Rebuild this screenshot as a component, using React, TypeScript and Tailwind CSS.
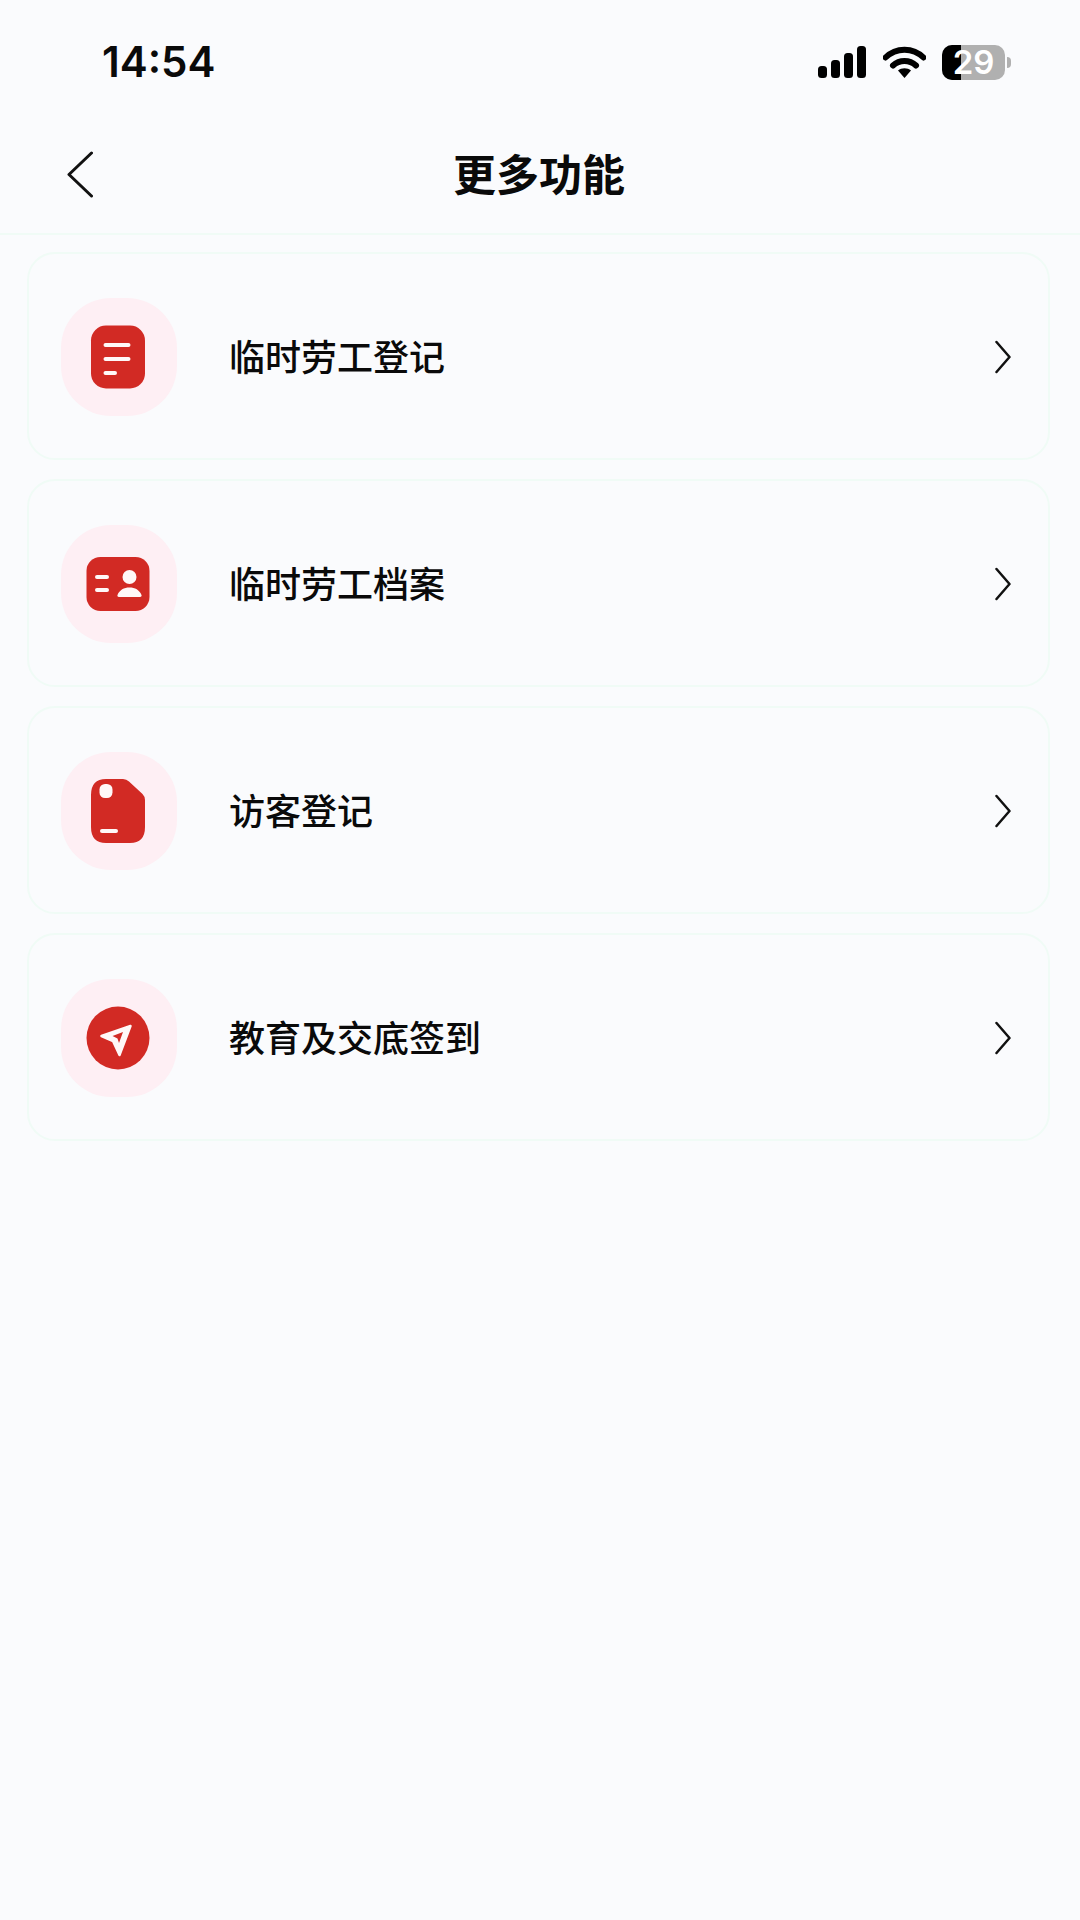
import { ReactNode } from 'react';

const cjk = "font-['Noto_Sans_CJK_SC','Noto_Sans_CJK_JP',sans-serif]";

function FileIcon() {
  return (
    <svg className="-ml-[2px]" width="64" height="64" viewBox="0 0 64 64">
      <rect x="5" y="0.5" width="54" height="63" rx="15" fill="#d22a24" />
      <path d="M19.5 20H42.5M19.5 34H42.5M19.5 48H29" stroke="#fff8f8" strokeWidth="4" strokeLinecap="round" />
    </svg>
  );
}

function CardIcon() {
  return (
    <svg className="-ml-[2px]" width="64" height="64" viewBox="0 0 64 64">
      <rect x="0.5" y="5" width="63" height="54" rx="14" fill="#d22a24" />
      <path d="M11 25H21M11 38H21" stroke="#fff8f8" strokeWidth="4" strokeLinecap="round" />
      <circle cx="43.5" cy="25" r="7" fill="#fff8f8" />
      <path d="M33 45C31.5 45 31 44 31.6 42.8C33.5 38 38 35.5 43.5 35.5C49 35.5 53.5 38 55.4 42.8C56 44 55.5 45 54 45Z" fill="#fff8f8" />
    </svg>
  );
}

function TagIcon() {
  return (
    <svg className="-ml-[2px]" width="64" height="64" viewBox="0 0 64 64">
      <path d="M20 0H37Q40.5 0 43 2.5L56.5 15Q59 17.5 59 21V48Q59 64 44 64H20Q5 64 5 48V16Q5 0 20 0Z" fill="#d22a24" />
      <rect x="13.5" y="5" width="13" height="14" rx="5.5" fill="#fff8f8" />
      <path d="M16 52H30" stroke="#fff8f8" strokeWidth="4" strokeLinecap="round" />
    </svg>
  );
}

function SendIcon() {
  return (
    <svg className="-ml-[2px]" width="64" height="64" viewBox="0 0 64 64">
      <circle cx="32" cy="32" r="31.5" fill="#d22a24" />
      <path d="M44.5 20L15.5 30L27 35L33.5 49Z" fill="#fff8f8" stroke="#fff8f8" strokeWidth="2.5" strokeLinejoin="round" />
      <path d="M37 26L26.5 30L31.5 32.5L33 37Z" fill="#d22a24" />
    </svg>
  );
}

function Row({ icon, label }: { icon: ReactNode; label: string }) {
  return (
    <div className="h-[208px] flex items-center pt-[2px] pl-[32px] pr-[37px] rounded-[28px] border-2 border-[#f0fbf6]">
      <div className="w-[116px] h-[118px] rounded-[50px] bg-[#feeff4] flex items-center justify-center shrink-0">
        {icon}
      </div>
      <span className={`ml-[52px] mb-[5px] flex-1 text-[36px] leading-[48px] font-medium text-[#0a0a0a] ${cjk}`}>{label}</span>
      <svg width="18" height="34" viewBox="0 0 18 34" fill="none">
        <path d="M3.5 2L16.5 17L3.5 32" stroke="#111" strokeWidth="2.5" strokeLinecap="round" strokeLinejoin="round" />
      </svg>
    </div>
  );
}

export default function App() {
  return (
    <div className="w-[1080px] h-[1920px] bg-[#fafbfd] overflow-hidden">
      {/* status bar */}
      <div className="h-[124px] flex items-center justify-between pl-[102px] pr-[69px]">
        <span className="text-[42px] leading-[50px] font-semibold text-[#0a0a0a] font-['Inter',sans-serif]">14:54</span>
        <div className="flex items-center">
          <svg width="49" height="32" viewBox="0 0 49 32" fill="#000">
            <rect x="0" y="20" width="9" height="12" rx="3.5" />
            <rect x="13" y="14" width="9" height="18" rx="3.5" />
            <rect x="26" y="7" width="9" height="25" rx="3.5" />
            <rect x="39" y="0" width="9" height="32" rx="3.5" />
          </svg>
          <svg className="ml-[16px]" width="43" height="32" viewBox="0 0 43 32" fill="none">
            <path d="M2.5 11.5C13 1 30 1 40.5 11.5" stroke="#000" strokeWidth="6" strokeLinecap="round" />
            <path d="M10 19.5C16.5 13.5 26.5 13.5 33 19.5" stroke="#000" strokeWidth="6" strokeLinecap="round" />
            <path d="M15 24.5C18.5 21.5 24.5 21.5 28 24.5L21.5 32Z" fill="#000" />
          </svg>
          <div className="ml-[16px] relative w-[63px] h-[35px] rounded-[10px] bg-[#b0b0b0]">
            <div className="absolute left-0 top-0 bottom-0 w-[19px] rounded-l-[10px] bg-black" />
            <span className="absolute inset-0 flex items-center justify-center text-[33px] leading-[35px] font-semibold text-white font-['Inter',sans-serif]">29</span>
          </div>
          <div className="ml-[2px] w-[4px] h-[11px] rounded-r-full bg-[#b0b0b0]" />
        </div>
      </div>

      {/* nav bar */}
      <div className="relative h-[111px] flex items-center justify-center pb-[13px] border-b-2 border-[#f0fbf6]">
        <svg className="absolute left-[65px] top-[27px]" width="28" height="47" viewBox="0 0 28 47" fill="none">
          <path d="M26.5 2L4 23.5L26.5 45" stroke="#111" strokeWidth="3" strokeLinecap="round" strokeLinejoin="round" />
        </svg>
        <span className={`text-[43px] leading-[56px] font-bold text-[#0a0a0a] -ml-[2px] ${cjk}`}>更多功能</span>
      </div>

      {/* list */}
      <div className="pt-[17px] pl-[27px] pr-[30px] flex flex-col gap-[19px]">
        <Row icon={<FileIcon />} label="临时劳工登记" />
        <Row icon={<CardIcon />} label="临时劳工档案" />
        <Row icon={<TagIcon />} label="访客登记" />
        <Row icon={<SendIcon />} label="教育及交底签到" />
      </div>
    </div>
  );
}
